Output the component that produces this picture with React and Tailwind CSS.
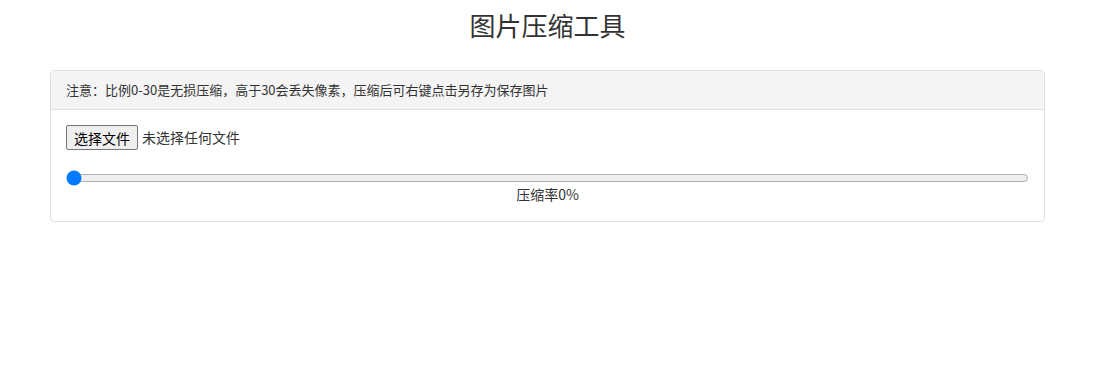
import { useState } from 'react'

export default function App() {
  const [rate, setRate] = useState(0)

  return (
    <div className="min-h-[385px] bg-white text-[#212529] font-['Microsoft_YaHei','Noto_Sans_CJK_SC',sans-serif]">
      <div className="ml-[50px] w-[995px]">
        <h3 className="pt-[7px] text-center text-[26px] leading-[36px] text-[#333]">图片压缩工具</h3>
        <div className="mt-[27px] rounded border border-[#dfdfdf]">
          <div className="h-[39px] flex items-center pl-[15px] pr-4 bg-[#f4f4f4] border-b border-[#dfdfdf] text-[13px] text-[#333]">
            注意：比例0-30是无损压缩，高于30会丢失像素，压缩后可右键点击另存为保存图片
          </div>
          <div className="px-[15px] pt-[15px] pb-[17px] text-[14px] text-[#333]">
            <div className="flex items-center h-[25px]">
              <button className="h-[25px] px-[7px] border border-[#767676] rounded-[2px] bg-[#efefef] text-[14px] text-black leading-none">
                选择文件
              </button>
              <span className="ml-[4px]">未选择任何文件</span>
            </div>
            <input
              type="range"
              min="0"
              max="100"
              value={rate}
              onChange={e => setRate(e.target.value)}
              className="block w-full mt-[20px] accent-[#007bff]"
            />
            <p className="text-center leading-[20px] -mt-[2px]">压缩率{rate}%</p>
          </div>
        </div>
      </div>
    </div>
  )
}
